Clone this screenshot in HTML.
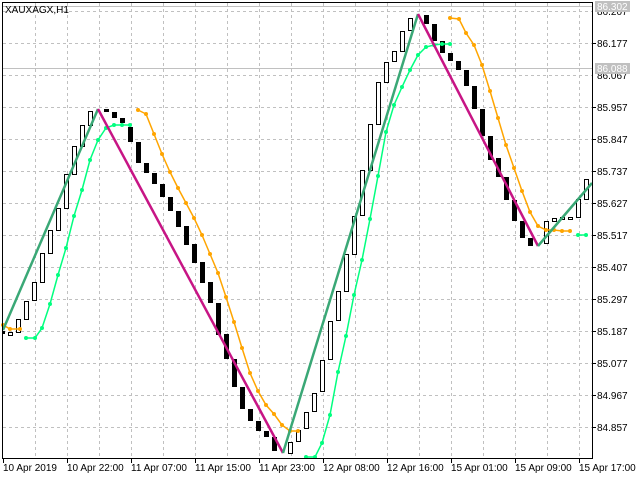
<!DOCTYPE html>
<html><head><meta charset="utf-8"><style>
html,body{margin:0;padding:0;background:#fff;width:640px;height:480px;overflow:hidden}
svg{display:block}
text{font-family:"Liberation Sans",sans-serif;font-size:10px;fill:#000}
</style></head><body>
<svg width="640" height="480" viewBox="0 0 640 480" xmlns="http://www.w3.org/2000/svg">
<rect width="640" height="480" fill="#fff"/>
<g stroke="#c0c0c0" stroke-dasharray="3,3" stroke-width="1">
<line x1="3" y1="11.5" x2="592" y2="11.5"/>
<line x1="3" y1="43.5" x2="592" y2="43.5"/><line x1="3" y1="75.5" x2="592" y2="75.5"/>
<line x1="3" y1="107.5" x2="592" y2="107.5"/><line x1="3" y1="139.5" x2="592" y2="139.5"/>
<line x1="3" y1="171.5" x2="592" y2="171.5"/><line x1="3" y1="203.5" x2="592" y2="203.5"/>
<line x1="3" y1="235.5" x2="592" y2="235.5"/><line x1="3" y1="267.5" x2="592" y2="267.5"/>
<line x1="3" y1="299.5" x2="592" y2="299.5"/><line x1="3" y1="331.5" x2="592" y2="331.5"/>
<line x1="3" y1="363.5" x2="592" y2="363.5"/><line x1="3" y1="395.5" x2="592" y2="395.5"/>
<line x1="3" y1="427.5" x2="592" y2="427.5"/>
<line x1="35.5" y1="3" x2="35.5" y2="458"/><line x1="67.5" y1="3" x2="67.5" y2="458"/><line x1="99.5" y1="3" x2="99.5" y2="458"/><line x1="131.5" y1="3" x2="131.5" y2="458"/><line x1="163.5" y1="3" x2="163.5" y2="458"/><line x1="195.5" y1="3" x2="195.5" y2="458"/><line x1="227.5" y1="3" x2="227.5" y2="458"/><line x1="259.5" y1="3" x2="259.5" y2="458"/><line x1="291.5" y1="3" x2="291.5" y2="458"/><line x1="323.5" y1="3" x2="323.5" y2="458"/><line x1="355.5" y1="3" x2="355.5" y2="458"/><line x1="387.5" y1="3" x2="387.5" y2="458"/><line x1="419.5" y1="3" x2="419.5" y2="458"/><line x1="451.5" y1="3" x2="451.5" y2="458"/><line x1="483.5" y1="3" x2="483.5" y2="458"/><line x1="515.5" y1="3" x2="515.5" y2="458"/><line x1="547.5" y1="3" x2="547.5" y2="458"/><line x1="579.5" y1="3" x2="579.5" y2="458"/>
</g>
<line x1="2" y1="6.5" x2="592" y2="6.5" stroke="#c0c0c0"/>
<line x1="2" y1="68.5" x2="592" y2="68.5" stroke="#c0c0c0"/>
<!-- hollow candles -->
<g fill="#fff" stroke="#000" stroke-width="1">
<rect x="8.5" y="332.5" width="4" height="3"/><rect x="16.5" y="319.5" width="4" height="13"/><rect x="24.5" y="301.5" width="4" height="18"/><rect x="32.5" y="282.5" width="4" height="18"/><rect x="40.5" y="253.5" width="4" height="29"/><rect x="48.5" y="230.5" width="4" height="23"/><rect x="56.5" y="208.5" width="4" height="22"/><rect x="64.5" y="174.5" width="4" height="34"/><rect x="72.5" y="146.5" width="4" height="28"/><rect x="80.5" y="125.5" width="4" height="21"/><rect x="88.5" y="111.5" width="4" height="14"/>
<rect x="288.5" y="442.5" width="4" height="11"/><rect x="296.5" y="430.5" width="4" height="11"/><rect x="304.5" y="412.5" width="4" height="16"/><rect x="312.5" y="393.5" width="4" height="18"/><rect x="320.5" y="360.5" width="4" height="31"/><rect x="328.5" y="321.5" width="4" height="38"/><rect x="336.5" y="291.5" width="4" height="29"/><rect x="344.5" y="254.5" width="4" height="37"/><rect x="352.5" y="216.5" width="4" height="38"/><rect x="360.5" y="170.5" width="4" height="45"/><rect x="368.5" y="124.5" width="4" height="46"/><rect x="376.5" y="82.5" width="4" height="42"/><rect x="384.5" y="62.5" width="4" height="20"/><rect x="392.5" y="51.5" width="4" height="10"/><rect x="400.5" y="31.5" width="4" height="20"/><rect x="408.5" y="18.5" width="4" height="12"/>
<rect x="544.5" y="221.5" width="4" height="22"/><rect x="552.5" y="218.5" width="4" height="3"/><rect x="560.5" y="217.5" width="4" height="2"/><rect x="568.5" y="217.5" width="4" height="2"/><rect x="576.5" y="199.5" width="4" height="18"/><rect x="584.5" y="179.5" width="4" height="20"/>
</g>
<!-- black candles -->
<g fill="#000">
<rect x="2" y="331" width="3" height="3"/>
<rect x="104" y="109" width="5" height="3"/><rect x="112" y="112" width="5" height="6"/><rect x="120" y="118" width="5" height="5"/><rect x="128" y="127" width="5" height="15"/><rect x="136" y="142" width="5" height="21"/><rect x="144" y="163" width="5" height="10"/><rect x="152" y="173" width="5" height="11"/><rect x="160" y="184" width="5" height="13"/><rect x="168" y="197" width="5" height="14"/><rect x="176" y="211" width="5" height="16"/><rect x="184" y="226" width="5" height="19"/><rect x="192" y="244" width="5" height="19"/><rect x="200" y="262" width="5" height="21"/><rect x="208" y="282" width="5" height="21"/><rect x="216" y="303" width="5" height="32"/><rect x="224" y="334" width="5" height="25"/><rect x="232" y="359" width="5" height="28"/><rect x="240" y="387" width="5" height="22"/><rect x="248" y="409" width="5" height="12"/><rect x="256" y="421" width="5" height="10"/><rect x="264" y="431" width="5" height="6"/><rect x="272" y="437" width="5" height="14"/>
<rect x="424" y="15" width="5" height="9"/><rect x="432" y="24" width="5" height="17"/><rect x="440" y="41" width="5" height="12"/><rect x="448" y="53" width="5" height="8"/><rect x="456" y="61" width="5" height="9"/><rect x="464" y="70" width="5" height="16"/><rect x="472" y="86" width="5" height="23"/><rect x="480" y="109" width="5" height="27"/><rect x="488" y="136" width="5" height="24"/><rect x="496" y="158" width="5" height="19"/><rect x="504" y="177" width="5" height="23"/><rect x="512" y="200" width="5" height="21"/><rect x="520" y="221" width="5" height="17"/><rect x="528" y="238" width="5" height="8"/>
</g>
<!-- orange -->
<g fill="none" stroke="#ffa500" stroke-width="1.5">
<polyline points="3,325 10,329 20,329"/>
<polyline points="138,110 146,114 154,134 162,154 170,172 178,188 186,203 194,218 202,235 210,254 218,273 226,297 234,322 242,348 250,373 258,391 266,405 274,414 282,425 290,431 298,431"/>
<polyline points="450,18 459,19 466,33 474,45 482,65 490,91 498,118 506,145 514,168 522,191 530,212 538,226 546,230 554,230 562,231 570,231"/>
</g>
<g fill="#ffa500">
<circle cx="3" cy="325" r="2"/><circle cx="10" cy="329" r="2"/><circle cx="20" cy="329" r="2"/>
<circle cx="138" cy="110" r="2"/><circle cx="146" cy="114" r="2"/><circle cx="154" cy="134" r="2"/><circle cx="162" cy="154" r="2"/><circle cx="170" cy="172" r="2"/><circle cx="178" cy="188" r="2"/><circle cx="186" cy="203" r="2"/><circle cx="194" cy="218" r="2"/><circle cx="202" cy="235" r="2"/><circle cx="210" cy="254" r="2"/><circle cx="218" cy="273" r="2"/><circle cx="226" cy="297" r="2"/><circle cx="234" cy="322" r="2"/><circle cx="242" cy="348" r="2"/><circle cx="250" cy="373" r="2"/><circle cx="258" cy="391" r="2"/><circle cx="266" cy="405" r="2"/><circle cx="274" cy="414" r="2"/><circle cx="282" cy="425" r="2"/><circle cx="290" cy="431" r="2"/><circle cx="298" cy="431" r="2"/>
<circle cx="450" cy="18" r="2"/><circle cx="459" cy="19" r="2"/><circle cx="466" cy="33" r="2"/><circle cx="474" cy="45" r="2"/><circle cx="482" cy="65" r="2"/><circle cx="490" cy="91" r="2"/><circle cx="498" cy="118" r="2"/><circle cx="506" cy="145" r="2"/><circle cx="514" cy="168" r="2"/><circle cx="522" cy="191" r="2"/><circle cx="530" cy="212" r="2"/><circle cx="538" cy="226" r="2"/><circle cx="546" cy="230" r="2"/><circle cx="554" cy="230" r="2"/><circle cx="562" cy="231" r="2"/><circle cx="570" cy="231" r="2"/>
</g>
<!-- spring green -->
<g fill="none" stroke="#00ff7f" stroke-width="1.5">
<polyline points="26,338 35,338 42,328 50,304 58,275 66,248 74,216 82,190 90,160 98,140 106,128 114,125 122,125 130,125"/>
<polyline points="306,457 315,457 322,443 330,415 338,372 346,336 354,295 362,260 370,219 378,176 386,132 394,105 402,87 410,70 418,55 426,47 434,45 442,44 450,44"/>
<polyline points="578,235 586,235"/>
</g>
<g fill="#00ff7f">
<circle cx="26" cy="338" r="2"/><circle cx="35" cy="338" r="2"/><circle cx="42" cy="328" r="2"/><circle cx="50" cy="304" r="2"/><circle cx="58" cy="275" r="2"/><circle cx="66" cy="248" r="2"/><circle cx="74" cy="216" r="2"/><circle cx="82" cy="190" r="2"/><circle cx="90" cy="160" r="2"/><circle cx="98" cy="140" r="2"/><circle cx="106" cy="128" r="2"/><circle cx="114" cy="125" r="2"/><circle cx="122" cy="125" r="2"/><circle cx="130" cy="125" r="2"/>
<circle cx="306" cy="457" r="2"/><circle cx="315" cy="457" r="2"/><circle cx="322" cy="443" r="2"/><circle cx="330" cy="415" r="2"/><circle cx="338" cy="372" r="2"/><circle cx="346" cy="336" r="2"/><circle cx="354" cy="295" r="2"/><circle cx="362" cy="260" r="2"/><circle cx="370" cy="219" r="2"/><circle cx="378" cy="176" r="2"/><circle cx="386" cy="132" r="2"/><circle cx="394" cy="105" r="2"/><circle cx="402" cy="87" r="2"/><circle cx="410" cy="70" r="2"/><circle cx="418" cy="55" r="2"/><circle cx="426" cy="47" r="2"/><circle cx="434" cy="45" r="2"/><circle cx="442" cy="44" r="2"/><circle cx="450" cy="44" r="2"/>
<circle cx="578" cy="235" r="2"/><circle cx="586" cy="235" r="2"/>
</g>
<!-- zigzag -->
<g fill="none" stroke-width="2.5" stroke-linejoin="round">
<polyline stroke="#3aa876" points="3,330 98,109"/>
<polyline stroke="#c71585" points="98,109 283,453"/>
<polyline stroke="#3aa876" points="283,453 418,14"/>
<polyline stroke="#c71585" points="418,14 538,246"/>
<polyline stroke="#3aa876" points="538,246 592,183"/>
</g>
<!-- frame -->
<rect x="2.5" y="2.5" width="590" height="456" fill="none" stroke="#000"/>
<rect x="593" y="0" width="47" height="480" fill="#fff"/>
<rect x="0" y="459" width="640" height="21" fill="#fff"/>
<line x1="592.5" y1="2" x2="592.5" y2="459" stroke="#000"/>
<line x1="2" y1="458.5" x2="593" y2="458.5" stroke="#000"/>
<g stroke="#000">
<line x1="592" y1="43.5" x2="596" y2="43.5"/><line x1="592" y1="107.5" x2="596" y2="107.5"/><line x1="592" y1="139.5" x2="596" y2="139.5"/><line x1="592" y1="171.5" x2="596" y2="171.5"/><line x1="592" y1="203.5" x2="596" y2="203.5"/><line x1="592" y1="235.5" x2="596" y2="235.5"/><line x1="592" y1="267.5" x2="596" y2="267.5"/><line x1="592" y1="299.5" x2="596" y2="299.5"/><line x1="592" y1="331.5" x2="596" y2="331.5"/><line x1="592" y1="363.5" x2="596" y2="363.5"/><line x1="592" y1="395.5" x2="596" y2="395.5"/><line x1="592" y1="427.5" x2="596" y2="427.5"/>
<line x1="3.5" y1="458" x2="3.5" y2="463"/><line x1="67.5" y1="458" x2="67.5" y2="463"/><line x1="131.5" y1="458" x2="131.5" y2="463"/><line x1="195.5" y1="458" x2="195.5" y2="463"/><line x1="259.5" y1="458" x2="259.5" y2="463"/><line x1="323.5" y1="458" x2="323.5" y2="463"/><line x1="387.5" y1="458" x2="387.5" y2="463"/><line x1="451.5" y1="458" x2="451.5" y2="463"/><line x1="515.5" y1="458" x2="515.5" y2="463"/><line x1="579.5" y1="458" x2="579.5" y2="463"/>
</g>
<text x="597" y="15">86.207</text>
<text x="597" y="47">86.177</text>
<text x="597" y="79">86.067</text>
<text x="597" y="111">85.957</text>
<text x="597" y="143">85.847</text>
<text x="597" y="175">85.737</text>
<text x="597" y="207">85.627</text>
<text x="597" y="239">85.517</text>
<text x="597" y="271">85.407</text>
<text x="597" y="303">85.297</text>
<text x="597" y="335">85.187</text>
<text x="597" y="367">85.077</text>
<text x="597" y="399">84.967</text>
<text x="597" y="431">84.857</text>
<rect x="595" y="1" width="35" height="11" fill="#c0c0c0"/>
<text x="597" y="10" style="fill:#fff">86.302</text>
<rect x="595" y="63" width="35" height="11" fill="#c0c0c0"/>
<text x="597" y="72" style="fill:#fff">86.088</text>
<text x="5" y="13">XAUXAGX,H1</text>
<text x="3" y="471">10 Apr 2019</text>
<text x="67" y="471">10 Apr 22:00</text>
<text x="131" y="471">11 Apr 07:00</text>
<text x="195" y="471">11 Apr 15:00</text>
<text x="259" y="471">11 Apr 23:00</text>
<text x="323" y="471">12 Apr 08:00</text>
<text x="387" y="471">12 Apr 16:00</text>
<text x="451" y="471">15 Apr 01:00</text>
<text x="515" y="471">15 Apr 09:00</text>
<text x="579" y="471">15 Apr 17:00</text>
</svg>
</body></html>
